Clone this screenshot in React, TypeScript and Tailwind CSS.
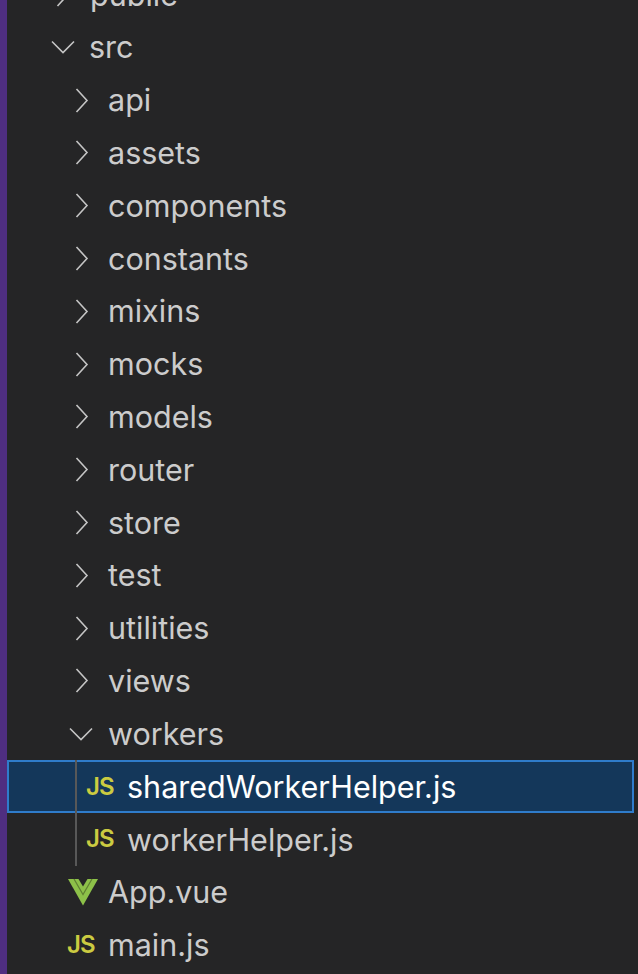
import React from "react";

const folders = ["api", "assets", "components", "constants", "mixins", "mocks", "models", "router", "store", "test", "utilities", "views"];

const ChevronRight = () => (
  <svg width="14" height="25" viewBox="0 0 14 25" fill="none" stroke="#c5c5c5" strokeWidth="1.6" className="shrink-0">
    <path d="M1.5 1 L12 12.5 L1.5 24" />
  </svg>
);

const ChevronDown = () => (
  <svg width="24" height="14" viewBox="0 0 24 14" fill="none" stroke="#c5c5c5" strokeWidth="1.6" className="shrink-0">
    <path d="M1 1.5 L12 12.5 L23 1.5" />
  </svg>
);

const JsIcon = () => (
  <span className="w-[26px] shrink-0 text-[24px] font-semibold leading-none tracking-[-0.8px] text-[#cbcb41] font-['Inter',sans-serif]">JS</span>
);

const VueIcon = () => (
  <svg width="30" height="27" viewBox="0 0 30 27" className="shrink-0">
    <path d="M0 0 H30 L15 26.5 Z" fill="#8dc149" />
    <path d="M6 0 L15 15.5 L24 0" fill="none" stroke="#5f8032" strokeWidth="1.2" />
    <path d="M10.5 0 H19.5 L15 7.5 Z" fill="#252526" />
  </svg>
);

const Label = ({ children, active }: { children: React.ReactNode; active?: boolean }) => (
  <span className={active ? "text-white" : "text-[#cccccc]"}>{children}</span>
);

const Row = ({ children, className = "" }: { children: React.ReactNode; className?: string }) => (
  <div className={`flex h-[52.82px] items-center ${className}`}>{children}</div>
);

export default function App() {
  return (
    <div className="flex h-[974px] w-[638px] overflow-hidden bg-[#252526] text-[30.5px] font-['Inter',sans-serif]">
      <div className="w-[7px] shrink-0 bg-[#4f2e80]" />
      <div className="-mt-[32px] flex-1">
        <Row className="pl-[49px]">
          <ChevronRight />
          <span className="ml-[20px]"><Label>public</Label></span>
        </Row>
        <Row className="pl-[44px]">
          <ChevronDown />
          <span className="ml-[14px]"><Label>src</Label></span>
        </Row>
        {folders.map((name) => (
          <Row key={name} className="pl-[68px]">
            <ChevronRight />
            <span className="ml-[19px]"><Label>{name}</Label></span>
          </Row>
        ))}
        <Row className="pl-[62px]">
          <ChevronDown />
          <span className="ml-[15px]"><Label>workers</Label></span>
        </Row>
        <div className="relative">
          <div className="absolute left-[68px] top-0 h-[106px] w-[2px] bg-[#585858]" />
          <Row className="mr-[4px] border-2 border-[#2f7ccb] bg-[#14375a] pl-[77px]">
            <JsIcon />
            <span className="ml-[15px]"><Label active>sharedWorkerHelper.js</Label></span>
          </Row>
          <Row className="pl-[79px]">
            <JsIcon />
            <span className="ml-[15px]"><Label>workerHelper.js</Label></span>
          </Row>
        </div>
        <Row className="pl-[61px]">
          <VueIcon />
          <span className="ml-[10px]"><Label>App.vue</Label></span>
        </Row>
        <Row className="pl-[60px]">
          <JsIcon />
          <span className="ml-[15px]"><Label>main.js</Label></span>
        </Row>
      </div>
    </div>
  );
}
